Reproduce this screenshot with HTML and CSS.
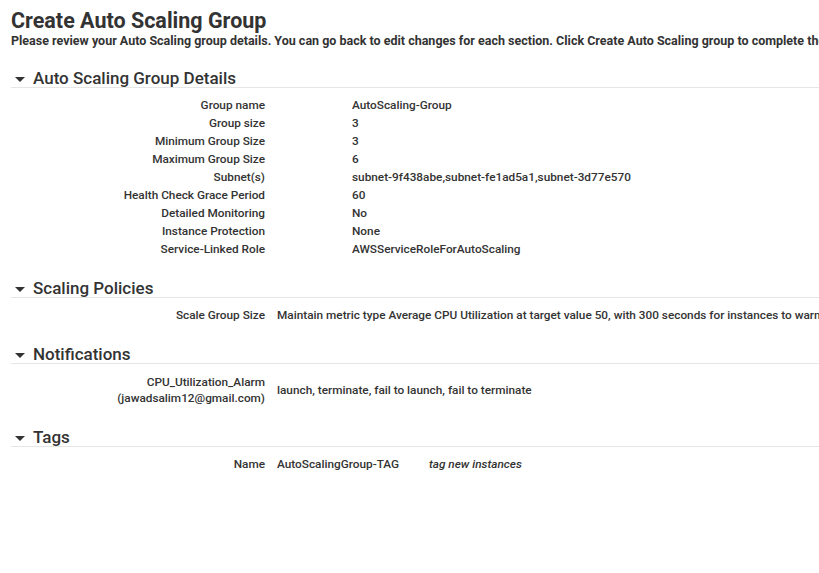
FILE: index.html
```html
<!DOCTYPE html>
<html>
<head>
<meta charset="utf-8">
<link rel="stylesheet" href="styles.css">
</head>
<body>
<div class="page">
  <h1 class="title">Create Auto Scaling Group</h1>
  <p class="intro">Please review your Auto Scaling group details. You can go back to edit changes for each section. Click Create Auto Scaling group to complete the creation of your Auto Scaling group.</p>

  <section class="section sec-details">
    <h2 class="sec-head"><span class="caret"></span>Auto Scaling Group Details</h2>
    <div class="rows wide">
      <div class="row"><div class="lbl">Group name</div><div class="val">AutoScaling-Group</div></div>
      <div class="row"><div class="lbl">Group size</div><div class="val">3</div></div>
      <div class="row"><div class="lbl">Minimum Group Size</div><div class="val">3</div></div>
      <div class="row"><div class="lbl">Maximum Group Size</div><div class="val">6</div></div>
      <div class="row"><div class="lbl">Subnet(s)</div><div class="val">subnet-9f438abe,subnet-fe1ad5a1,subnet-3d77e570</div></div>
      <div class="row"><div class="lbl">Health Check Grace Period</div><div class="val">60</div></div>
      <div class="row"><div class="lbl">Detailed Monitoring</div><div class="val">No</div></div>
      <div class="row"><div class="lbl">Instance Protection</div><div class="val">None</div></div>
      <div class="row"><div class="lbl">Service-Linked Role</div><div class="val">AWSServiceRoleForAutoScaling</div></div>
    </div>
  </section>

  <section class="section sec-policies">
    <h2 class="sec-head"><span class="caret"></span>Scaling Policies</h2>
    <div class="rows">
      <div class="row"><div class="lbl">Scale Group Size</div><div class="val">Maintain metric type Average CPU Utilization at target value 50, with 300 seconds for instances to warm up after scaling</div></div>
    </div>
  </section>

  <section class="section sec-notif">
    <h2 class="sec-head"><span class="caret"></span>Notifications</h2>
    <div class="rows rows-notif">
      <div class="row mid"><div class="lbl">CPU_Utilization_Alarm<br>(jawadsalim12@gmail.com)</div><div class="val">launch, terminate, fail to launch, fail to terminate</div></div>
    </div>
  </section>

  <section class="section sec-tags">
    <h2 class="sec-head"><span class="caret"></span>Tags</h2>
    <div class="rows">
      <div class="row"><div class="lbl">Name</div><div class="val tagval">AutoScalingGroup-TAG</div><div class="val tagnote">tag new instances</div></div>
    </div>
  </section>
</div>
</body>
</html>
```

FILE: styles.css
```css
html, body {
  margin: 0;
  padding: 0;
  background: #ffffff;
  overflow: hidden;
}
body {
  font-family: Roboto, "Liberation Sans", sans-serif;
  color: #333333;
  width: 819px;
}
.page {
  padding: 8px 0 0 11px;
  width: 1400px;
}
.title {
  font-size: 21.5px;
  font-weight: 700;
  line-height: 26px;
  margin: 0;
  color: #333333;
}
.intro {
  font-size: 12.5px;
  font-weight: 700;
  line-height: 14px;
  margin: 0;
  white-space: nowrap;
}
.section {
  width: 808px;
}
.sec-details { margin-top: 22px; }
.sec-policies { margin-top: 22px; }
.sec-notif { margin-top: 22px; }
.sec-tags { margin-top: 23px; }
.sec-head {
  display: flex;
  align-items: center;
  font-size: 17px;
  font-weight: 500;
  line-height: 17px;
  margin: 0;
  padding-bottom: 0;
  border-bottom: 1px solid #e6e6e6;
  color: #333333;
}
.caret {
  width: 0;
  height: 0;
  border-left: 5px solid transparent;
  border-right: 5px solid transparent;
  border-top: 5px solid #333333;
  margin: 1px 8px 0 4px;
}
.rows {
  padding-top: 8px;
}
.rows-notif {
  padding-top: 10px;
}
.row {
  display: flex;
  font-size: 11.8px;
  font-weight: 500;
  line-height: 18px;
  white-space: nowrap;
}
.row.mid {
  align-items: center;
  line-height: 16px;
}
.lbl {
  width: 254px;
  flex: none;
  text-align: right;
}
.val {
  margin-left: 12px;
}
.wide .val {
  margin-left: 87px;
}
.tagval {
  width: 140px;
  flex: none;
}
.tagnote {
  font-style: italic;
}
```
